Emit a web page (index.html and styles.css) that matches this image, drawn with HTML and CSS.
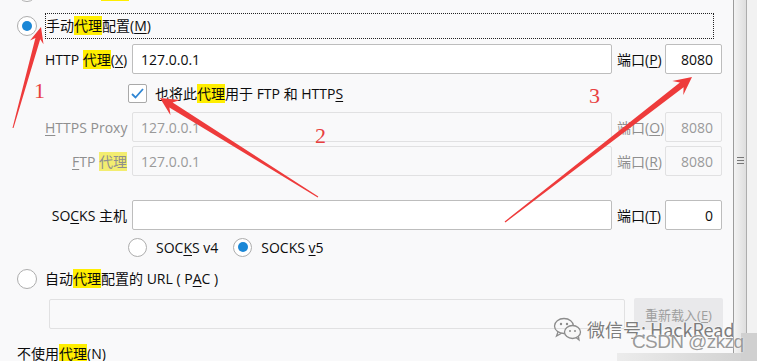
FILE: index.html
```html
<!DOCTYPE html>
<html>
<head>
    <title>连接设置</title>
    <link rel="stylesheet" href="styles.css">
</head>
<body>
    <div class="window">
        <div class="panel">
            <div class="option option-cut">
                <span class="radio"></span>
                <span class="option-label">使用系统<mark class="hl">代理</mark>设置(<u>Y</u>)</span>
            </div>
            <div class="option">
                <span class="radio checked"></span>
                <span class="option-label focused">手动<mark class="hl">代理</mark>配置(<u>M</u>)</span>
            </div>

            <div class="proxy-grid">
                <label class="field-label">HTTP <mark class="hl">代理</mark>(<u>X</u>)</label>
                <input class="text-input" type="text" value="127.0.0.1">
                <label class="port-label">端口(<u>P</u>)</label>
                <input class="text-input port" type="text" value="8080">

                <div class="check-row">
                    <span class="checkbox">
                        <svg width="13" height="11" viewBox="0 0 13 11"><path d="M1 6 L4.5 9.5 L12 1" fill="none" stroke="#2f86d4" stroke-width="1.8"/></svg>
                    </span>
                    <span>也将此<mark class="hl">代理</mark>用于 FTP 和 HTTP<u>S</u></span>
                </div>

                <label class="field-label disabled"><u>H</u>TTPS Proxy</label>
                <input class="text-input" type="text" value="127.0.0.1" disabled>
                <label class="port-label disabled">端口(<u>O</u>)</label>
                <input class="text-input port" type="text" value="8080" disabled>

                <label class="field-label disabled"><u>F</u>TP <mark class="hl pale">代理</mark></label>
                <input class="text-input" type="text" value="127.0.0.1" disabled>
                <label class="port-label disabled">端口(<u>R</u>)</label>
                <input class="text-input port" type="text" value="8080" disabled>

                <div class="gap-row"></div>

                <label class="field-label">SO<u>C</u>KS 主机</label>
                <input class="text-input" type="text" value="">
                <label class="port-label">端口(<u>T</u>)</label>
                <input class="text-input port" type="text" value="0">

                <div class="socks-row">
                    <span class="radio small"></span>
                    <span>SOC<u>K</u>S v4</span>
                    <span class="radio small checked"></span>
                    <span>SOCKS <u>v</u>5</span>
                </div>
            </div>

            <div class="option option-auto">
                <span class="radio"></span>
                <span class="option-label">自动<mark class="hl">代理</mark>配置的 URL ( P<u>A</u>C )</span>
            </div>
            <div class="url-row">
                <input class="text-input url" type="text" value="" disabled>
                <button class="reload" disabled>重新载入(<u>E</u>)</button>
            </div>
            <div class="no-proxy">不使用<mark class="hl">代理</mark>(<u>N</u>)</div>
        </div>

        <div class="scrollbar">
            <div class="scroll-thumb"><span class="grip"></span></div>
            <div class="scroll-rest"></div>
        </div>

        <!-- annotations drawn on top of the screenshot -->
        <svg class="marks" width="757" height="361" viewBox="0 0 757 361">
            <polygon fill="#ee3b3b" points="13.5,128.1 40.2,39.2 43.5,44.3 41,27 30,40.6 35.4,37.9 12.5,127.9"/>
            <polygon fill="#ee3b3b" points="318.3,196.5 172.6,102.4 180,99.9 160,98 170.5,115.2 169.4,107.4 317.7,197.5"/>
            <polygon fill="#ee3b3b" points="505.4,222.5 683.6,87.3 683.3,95.1 692,77 672.3,80.9 679.9,82.6 504.6,221.5"/>
            <text x="34" y="98" class="num">1</text>
            <text x="315" y="143" class="num">2</text>
            <text x="589" y="103" class="num">3</text>
        </svg>

        <div class="shade-bottom"></div>
        <div class="shade-side"></div>
        <div class="watermark">
            <svg width="32" height="26" viewBox="0 0 32 26">
                <ellipse cx="12" cy="10" rx="9.5" ry="7.5" fill="none" stroke="#8c8c8c" stroke-width="1.3"/>
                <path d="M6 16 L4.5 20 L9.5 17.2" fill="none" stroke="#8c8c8c" stroke-width="1.3"/>
                <ellipse cx="20.5" cy="16" rx="8" ry="6.5" fill="#f7f7f7" stroke="#8c8c8c" stroke-width="1.3"/>
                <path d="M24 21.5 L27 24 L26.5 20.5" fill="none" stroke="#8c8c8c" stroke-width="1.3"/>
                <circle cx="9" cy="8" r="1.2" fill="#8c8c8c"/>
                <circle cx="15" cy="8" r="1.2" fill="#8c8c8c"/>
                <circle cx="18" cy="15" r="1" fill="#8c8c8c"/>
                <circle cx="23" cy="15" r="1" fill="#8c8c8c"/>
            </svg>
            <span>微信号: HackRead</span>
        </div>
        <div class="csdn">CSDN @zkzq</div>
    </div>
</body>
</html>
```

FILE: styles.css
```css
body { margin: 0; background: #f9f9fa; font-family: "Open Sans", "Noto Sans CJK SC", sans-serif; font-size: 14px; color: #0c0c0d; }
.window { position: relative; display: flex; width: 757px; height: 361px; overflow: hidden; }
.panel { width: 733px; padding-left: 17px; box-sizing: border-box; }

u { text-decoration: underline; text-underline-offset: 2px; }
.hl { background: #ffee00; color: inherit; padding: 0; }
.hl.pale { background: #f3ed70; }

.option { display: flex; align-items: center; gap: 8px; height: 26px; margin-top: 8px; }
.option-cut { margin-top: -21px; }
.option-label { line-height: 24px; white-space: nowrap; }
.option-label.focused { flex: 1; margin-right: 19px; height: 26px; box-sizing: border-box; border: 1px dotted #222; padding-left: 0; }

.radio { width: 20px; height: 20px; box-sizing: border-box; border: 1px solid #adadad; border-radius: 50%; background: #fff; display: flex; align-items: center; justify-content: center; flex: none; }
.radio.small { width: 19px; height: 19px; }
.radio.checked::after { content: ""; width: 10px; height: 10px; border-radius: 50%; background: #1b87d6; }

.proxy-grid { display: grid; grid-template-columns: 82px 480px 43px 57px; grid-template-rows: 30px 30px 30px 30px 16px 30px 26px; column-gap: 5px; row-gap: 4px; margin: 5px 0 0 28px; }
.field-label { align-self: center; text-align: right; white-space: nowrap; }
.port-label { align-self: center; white-space: nowrap; }
.disabled { color: #8f8f8f; }

.text-input { height: 30px; box-sizing: border-box; border: 1px solid #bdbdbd; border-radius: 2px; background: #fff; padding: 0 8px; font: inherit; color: #0c0c0d; margin: 0; width: 100%; }
.text-input:disabled { background: #f9f9fa; border-color: #e1e1e2; color: #9a9a9a; }
.text-input.port { text-align: right; }

.check-row { grid-column: 2 / 5; display: flex; align-items: center; gap: 8px; margin-left: -4px; }
.checkbox { width: 19px; height: 19px; box-sizing: border-box; border: 1px solid #a9a9a9; border-radius: 2px; background: #fff; display: flex; align-items: center; justify-content: center; }
.gap-row { grid-column: 1 / -1; }
.socks-row { grid-column: 2 / 5; display: flex; align-items: center; gap: 9px; margin-left: -4px; }
.socks-row .radio.small:nth-of-type(3) { margin-left: 6px; }

.option-auto { margin-top: 6px; }
.url-row { display: flex; align-items: center; gap: 9px; margin: 6px 0 0 32px; }
.text-input.url { width: 576px; }
.reload { width: 89px; height: 32px; border: none; border-radius: 2px; background: #e9e9eb; color: #9e9e9e; font: inherit; font-size: 13px; padding: 0; }
.no-proxy { margin-top: 11px; line-height: 26px; }

.scrollbar { width: 24px; display: flex; }
.scroll-thumb { width: 14px; box-sizing: border-box; border-left: 1px solid #9c9c9c; border-right: 1px solid #adadad; background: linear-gradient(to right, #f3f3f3, #dedede); display: flex; justify-content: center; padding-top: 157px; }
.grip { width: 7px; height: 8px; background: repeating-linear-gradient(to bottom, #777 0, #777 1px, transparent 1px, transparent 3px); }
.scroll-rest { flex: 1; background: #f2f2f2; }

.marks { position: absolute; left: 0; top: 0; pointer-events: none; }
.num { font-family: "Liberation Serif", serif; font-size: 22px; fill: #e8403f; }

.shade-bottom { position: absolute; left: 617px; top: 353px; width: 140px; height: 8px; background: linear-gradient(to right, #ececec, #cfcfcf); }
.shade-side { position: absolute; left: 741px; top: 333px; width: 16px; height: 28px; background: #d0d0d0; }
.watermark { position: absolute; left: 552px; top: 316px; display: flex; align-items: center; gap: 3px; color: #7c7c7c; font-family: "Noto Sans CJK SC", sans-serif; font-size: 18px; line-height: 26px; white-space: nowrap; text-shadow: 0 0 2px #fff, 0 0 2px #fff; }
.csdn { position: absolute; left: 632px; top: 329px; color: #9a9a9a; font-family: "Liberation Sans", sans-serif; font-size: 19px; letter-spacing: -0.6px; line-height: 26px; white-space: nowrap; text-shadow: 0 0 2px #fff; }
```
